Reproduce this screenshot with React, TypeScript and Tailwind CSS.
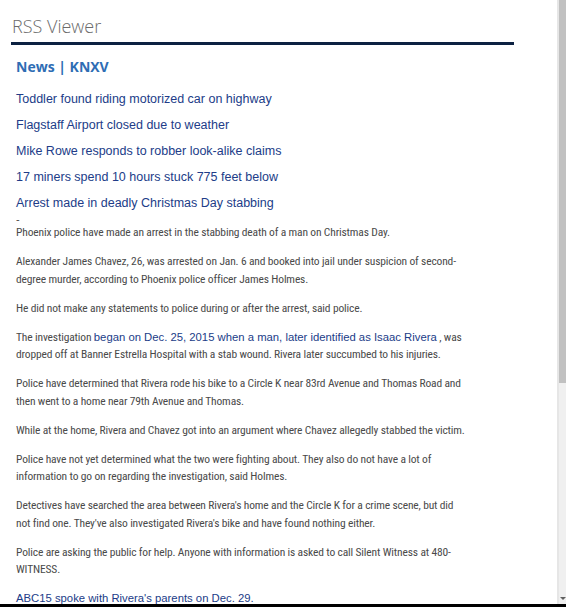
const headlines = [
  'Toddler found riding motorized car on highway',
  'Flagstaff Airport closed due to weather',
  'Mike Rowe responds to robber look-alike claims',
  '17 miners spend 10 hours stuck 775 feet below',
  'Arrest made in deadly Christmas Day stabbing',
];

const body =
  "font-['Roboto_Condensed','Noto_Sans',sans-serif] font-stretch-condensed text-[11.5px] leading-[17.5px] tracking-[-0.15px] text-[#4a4a4a]";
const link = "font-['Liberation_Sans',Arial,sans-serif] text-[#213c88]";

function Scrollbar() {
  return (
    <div className="flex w-[9px] shrink-0 flex-col border-l-2 border-[#e6e6e6] bg-[#f0f0f0]">
      <div className="h-[383px] bg-[#c1c1c1]" />
      <div className="flex-1" />
      <div className="flex h-[10px] items-center justify-center pb-[2px]">
        <span className="h-0 w-0 border-x-[3px] border-t-[3px] border-x-transparent border-t-[#606060]" />
      </div>
    </div>
  );
}

export default function App() {
  return (
    <div className="flex h-[607px] w-[566px] overflow-hidden border-b-[3px] border-black bg-white">
      <div className="min-w-0 flex-1 overflow-hidden">
        <h1 className="pl-[12px] pt-[14px] font-['Open_Sans',sans-serif] text-[18px] font-light leading-[24px] text-[#6b6b6b]">
          RSS Viewer
        </h1>
        <div className="ml-[11px] mt-[4px] h-[3px] w-[503px] bg-[#0c2141]" />

        <div className="px-[16px]">
          <h2 className="mt-[13px] font-['Open_Sans',sans-serif] text-[14px] font-bold leading-[18px] text-[#2e6db4]">
            News | KNXV
          </h2>

          <ul className="mt-[10px]">
            {headlines.map((h) => (
              <li key={h} className={`${link} text-[12.5px] leading-[26px]`}>
                {h}
              </li>
            ))}
          </ul>

          <div className="h-[8px] font-['Liberation_Sans',sans-serif] text-[11px] leading-[6px] text-[#4a4a4a]">-</div>

          <div className="w-[450px] space-y-[11.5px]">
            <p className={body}>Phoenix police have made an arrest in the stabbing death of a man on Christmas Day.</p>
            <p className={body}>
              Alexander James Chavez, 26, was arrested on Jan. 6 and booked into jail under suspicion of second-degree
              murder, according to Phoenix police officer James Holmes.
            </p>
            <p className={body}>He did not make any statements to police during or after the arrest, said police.</p>
            <p className={body}>
              The investigation{' '}
              <span className={`${link} text-[11.3px] tracking-normal`}>
                began on Dec. 25, 2015 when a man, later identified as Isaac Rivera
              </span>{' '}
              , was dropped off at Banner Estrella Hospital with a stab wound. Rivera later succumbed to his injuries.
            </p>
            <p className={body}>
              Police have determined that Rivera rode his bike to a Circle K near 83rd Avenue and Thomas Road and then went
              to a home near 79th Avenue and Thomas.
            </p>
            <p className={body}>
              While at the home, Rivera and Chavez got into an argument where Chavez allegedly stabbed the victim.
            </p>
            <p className={body}>
              Police have not yet determined what the two were fighting about. They also do not have a lot of information
              to go on regarding the investigation, said Holmes.
            </p>
            <p className={body}>
              Detectives have searched the area between Rivera's home and the Circle K for a crime scene, but did not find
              one. They've also investigated Rivera's bike and have found nothing either.
            </p>
            <p className={body}>
              Police are asking the public for help. Anyone with information is asked to call Silent Witness at 480-WITNESS.
            </p>
            <p className={`${link} text-[11.3px] leading-[17.5px]`}>ABC15 spoke with Rivera's parents on Dec. 29.</p>
          </div>
        </div>
      </div>
      <Scrollbar />
    </div>
  );
}
